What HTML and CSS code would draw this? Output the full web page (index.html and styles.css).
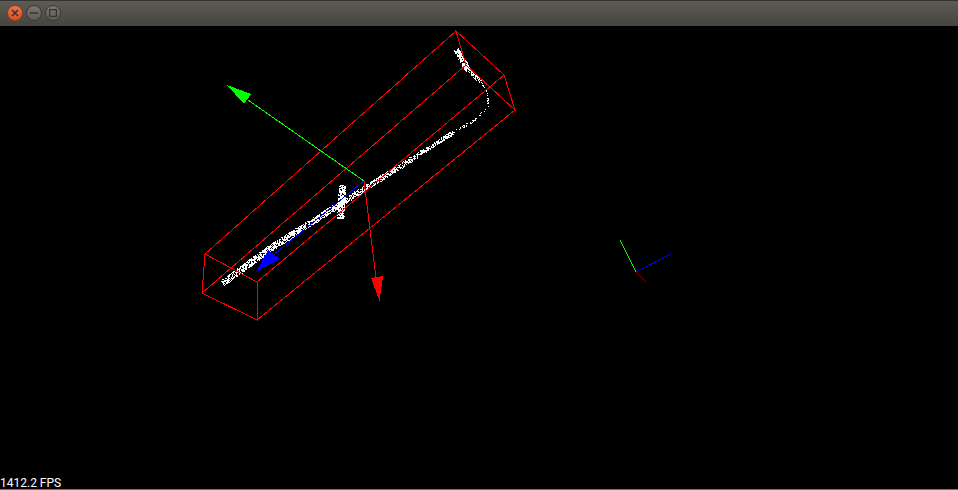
FILE: index.html
```html
<!DOCTYPE html>
<html lang="en">
<head>
<meta charset="utf-8">
<title>Point cloud viewer</title>
<link rel="stylesheet" href="styles.css">
</head>
<body>
<div class="window">
  <header class="titlebar">
    <button class="wbtn wbtn-close" aria-label="Close">
      <svg width="8" height="8" viewBox="0 0 8 8"><path d="M1 1L7 7M7 1L1 7"/></svg>
    </button>
    <button class="wbtn" aria-label="Minimize">
      <svg width="8" height="8" viewBox="0 0 8 8"><path d="M0 4H8"/></svg>
    </button>
    <button class="wbtn" aria-label="Maximize">
      <svg width="8" height="8" viewBox="0 0 8 8"><rect x="0.5" y="0.5" width="7" height="7"/></svg>
    </button>
  </header>
  <main class="viewport">
    <svg class="scene" width="958" height="464" viewBox="0 26 958 464">
      <path id="cloud" class="cloud" d=""/>
      <g class="wire red">
        <path d="M205 254L456 31M257 282L504 75M257 320L515 110M202 293L466 65"/>
        <path d="M205 254L257 282L257 320L202 293Z"/>
        <path d="M456 31L504 75L515 110L466 65Z"/>
        <path d="M364 181L376 278"/>
      </g>
      <path class="wire green" d="M364 181L248 100"/>
      <path class="wire blue" d="M364 181L273 255"/>
      <polygon class="fill-red" points="371,278 383,276 379.5,301"/>
      <polygon class="fill-green" points="227,85 251,94 244,104"/>
      <polygon class="fill-blue" points="256,272 280,259 268,250"/>
      <path class="wire green" d="M636 272L620 240"/>
      <path class="wire blue" d="M636 272L671 254"/>
      <path class="wire darkred" d="M636 272L646 282"/>
    </svg>
    <div class="fps">1412.2 FPS</div>
  </main>
  <div class="edge"></div>
</div>
<script src="script.js"></script>
</body>
</html>
```
FILE: styles.css
```css
html, body {
  margin: 0;
  height: 100%;
  background: #000;
  overflow: hidden;
}
.window {
  width: 958px;
  height: 490px;
  display: flex;
  flex-direction: column;
}
.titlebar {
  height: 26px;
  flex: none;
  box-sizing: border-box;
  display: flex;
  align-items: center;
  gap: 3px;
  padding: 0 0 1px 7px;
  background: linear-gradient(#5d5b54, #45443e);
  border-top: 1px solid #34332f;
}
.wbtn {
  width: 14px;
  height: 14px;
  padding: 0;
  border: 1px solid #3a3935;
  border-radius: 50%;
  background: linear-gradient(#77766f, #5c5b55);
  display: flex;
  align-items: center;
  justify-content: center;
  box-sizing: content-box;
}
.wbtn svg {
  fill: none;
  stroke: #35342f;
  stroke-width: 1.5;
}
.wbtn-close {
  background: linear-gradient(#f0734a, #e04e1f);
  border-color: #8a4029;
}
.viewport {
  position: relative;
  flex: 1;
  background: #000;
  display: flex;
  align-items: flex-end;
}
.scene {
  position: absolute;
  left: 0;
  top: 0;
}
.fps {
  position: relative;
  color: #fff;
  font: 12px/11px Roboto, "Liberation Sans", sans-serif;
}
.edge {
  height: 1px;
  flex: none;
  background: #6f6f6f;
}
.cloud {
  fill: #fff;
  shape-rendering: crispEdges;
}
.wire {
  fill: none;
  stroke-width: 1;
  shape-rendering: crispEdges;
}
.red { stroke: #f00; }
.green { stroke: #0f0; }
.blue { stroke: #00f; }
.darkred { stroke: #800; }
.fill-red { fill: #f00; shape-rendering: crispEdges; }
.fill-green { fill: #0f0; shape-rendering: crispEdges; }
.fill-blue { fill: #00f; shape-rendering: crispEdges; }
```
FILE: script.js
```js
// Deterministic point cloud: [x0, y0, x1, y1, number of points, half-width]
var segments = [
  [222, 283, 267, 250, 420, 3.2],
  [267, 250, 300, 229, 320, 3.2],
  [300, 229, 347, 199, 380, 3],
  [347, 199, 392, 171, 280, 2.6],
  [392, 171, 425, 150, 170, 2.6],
  [425, 150, 453, 132, 150, 2],
  [453, 132, 474, 120, 30, 1.2],
  [474, 120, 487, 108, 10, 1],
  [487, 108, 488, 94, 12, 1],
  [488, 94, 480, 81, 14, 0.8],
  [480, 81, 468, 70, 50, 2],
  [468, 70, 463, 62, 90, 3],
  [463, 62, 456, 49, 120, 2.6],
  [342, 185, 340, 218, 380, 3.6]
];
var state = 12345;
function rnd() {
  state = (state + 0x6D2B79F5) | 0;
  var t = Math.imul(state ^ (state >>> 15), 1 | state);
  t = (t + Math.imul(t ^ (t >>> 7), 61 | t)) ^ t;
  return ((t ^ (t >>> 14)) >>> 0) / 4294967296;
}
var d = [];
segments.forEach(function (s) {
  var dx = s[2] - s[0], dy = s[3] - s[1];
  var len = Math.sqrt(dx * dx + dy * dy);
  for (var i = 0; i < s[4]; i++) {
    var t = rnd();
    var off = (rnd() * 2 - 1) * s[5];
    var x = Math.round(s[0] + dx * t - dy / len * off);
    var y = Math.round(s[1] + dy * t + dx / len * off);
    d.push("M" + x + " " + y + "h1v1h-1z");
  }
});
document.getElementById("cloud").setAttribute("d", d.join(""));
```
